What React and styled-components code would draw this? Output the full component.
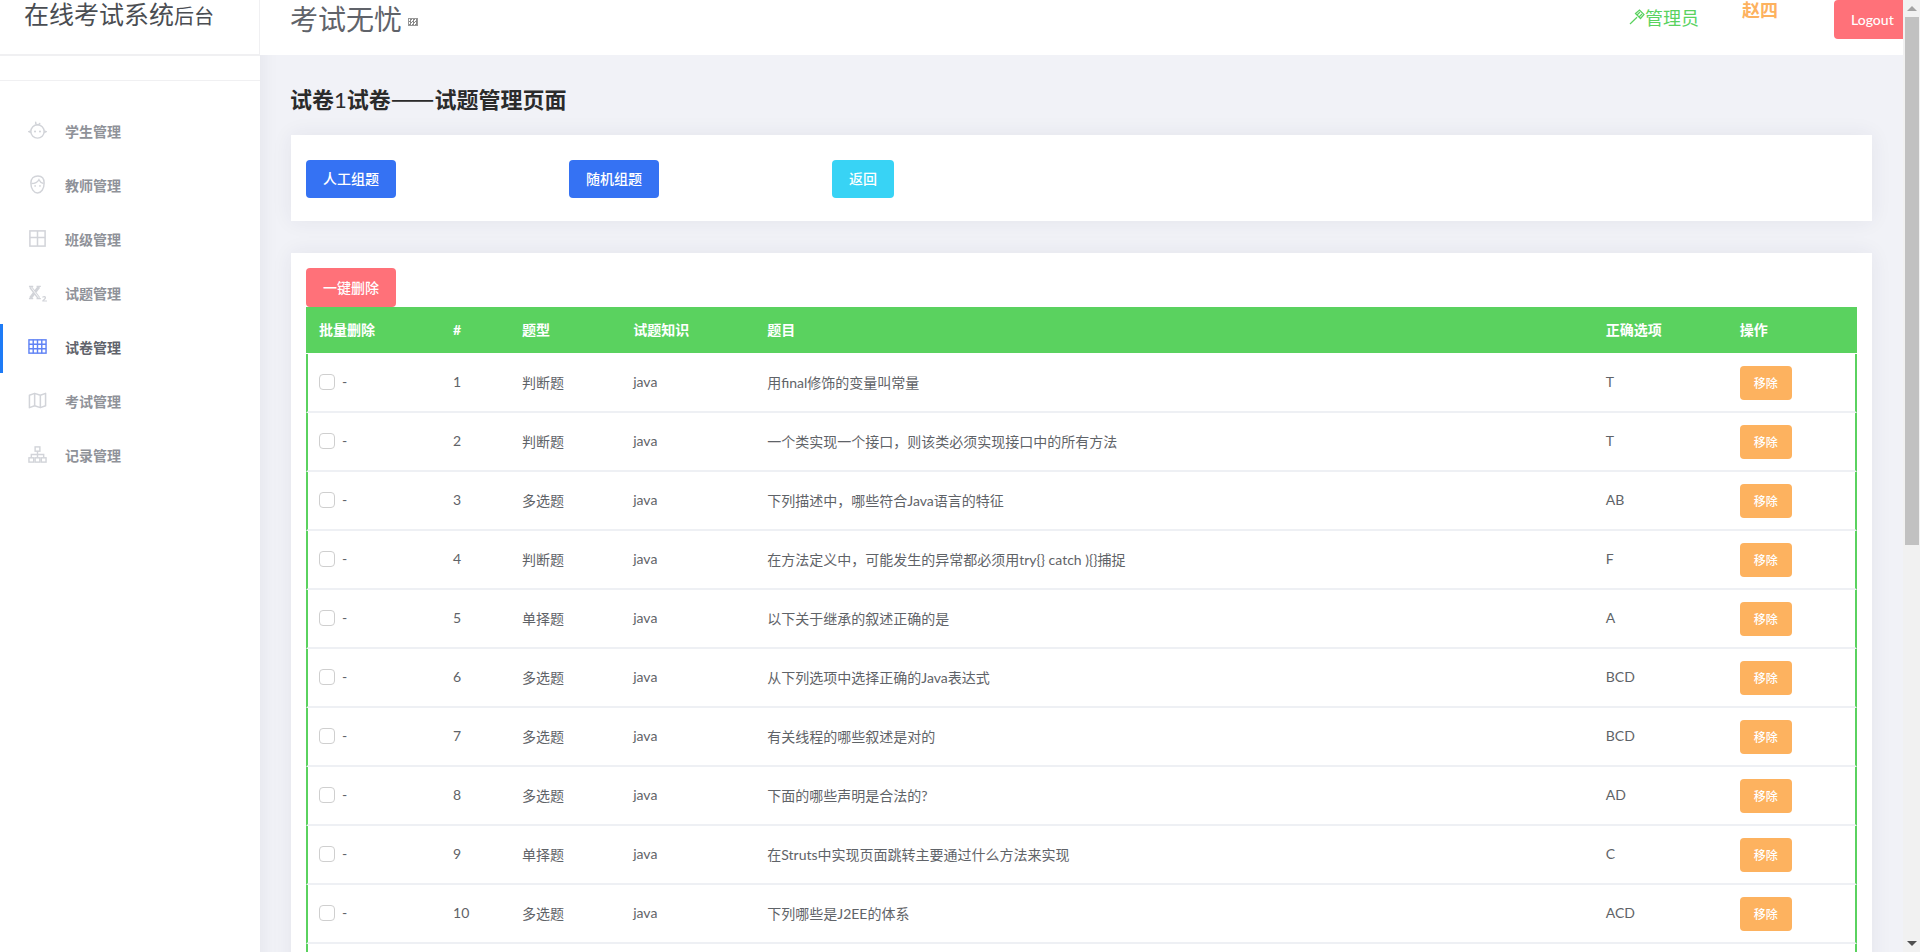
import styled, { createGlobalStyle } from "styled-components";

const GlobalStyle = createGlobalStyle`
  html::-webkit-scrollbar {
    display: none;
  }
  body {
    margin: 0;
    background: #f1f2f7;
    font-family: Lato, "Noto Sans CJK SC", sans-serif;
    font-size: 14px;
    color: #5f6368;
  }
  * {
    box-sizing: border-box;
  }
`;

const Layout = styled.div`
  display: flex;
  align-items: stretch;
  min-height: 100vh;
  padding-right: 17px;
`;

const Sidebar = styled.aside`
  width: 260px;
  flex: none;
  background: #fff;
  box-shadow: 0 0 18px rgba(40, 40, 80, 0.08);
  position: relative;
  z-index: 2;
`;

const Brand = styled.div`
  height: 56px;
  padding-left: 24px;
  border-bottom: 2px solid #f0f0f2;
  border-right: 1px solid #f0f0f2;
  font-size: 25px;
  line-height: 28px;
  color: #4a4d52;
  small {
    font-size: 20px;
  }
`;

const BrandGap = styled.div`
  height: 25px;
  border-bottom: 1px solid #f0f0f2;
`;

const Nav = styled.nav`
  padding-top: 27px;
  display: flex;
  flex-direction: column;
  gap: 5px;
`;

const NavItem = styled.a`
  height: 49px;
  padding-bottom: 4px;
  display: flex;
  align-items: center;
  gap: 18px;
  font-size: 14px;
  font-weight: 600;
  color: ${(p) => (p.$active ? "#60636b" : "#8f9299")};
  border-left: ${(p) => (p.$active ? "3px solid #1e7bf6" : "none")};
  padding-left: ${(p) => (p.$active ? "25px" : "28px")};
  svg {
    flex: none;
    width: 19px;
    height: 19px;
    color: ${(p) => (p.$active ? "#5f82f5" : "#d2d4d9")};
  }
`;

const Main = styled.main`
  flex: 1;
  min-width: 0;
`;

const Header = styled.header`
  height: 55px;
  background: #fff;
  display: flex;
  padding-left: 30px;
  overflow: hidden;
  position: relative;
  z-index: 3;
`;

const HeaderTitle = styled.div`
  font-size: 28px;
  line-height: 38px;
  color: #60636a;
  display: flex;
  align-items: flex-start;
`;

const Tofu = styled.span`
  width: 10px;
  height: 8px;
  margin: 18px 0 0 6px;
  border: 1px solid #999;
  background: repeating-conic-gradient(#888 0 25%, #fff 0 50%) 0 0 / 3px 3px;
`;

const HeaderRight = styled.div`
  margin-left: auto;
  display: flex;
  align-items: flex-start;
`;

const RoleText = styled.div`
  display: flex;
  align-items: center;
  height: 34px;
  color: #5ad25f;
  font-size: 18px;
  svg {
    width: 16px;
    height: 16px;
  }
`;

const UserName = styled.div`
  margin-left: 43px;
  color: #fdb25f;
  font-size: 18px;
  font-weight: 700;
  line-height: 20px;
`;

const LogoutButton = styled.button`
  margin-left: 56px;
  width: 69px;
  height: 39px;
  padding: 0 0 0 17px;
  border: none;
  border-radius: 4px 0 0 4px;
  background: #ff7179;
  color: #fff;
  text-align: left;
  font: inherit;
  font-size: 14px;
  font-weight: 500;
`;

const Content = styled.div`
  padding: 27px 31px 30px 30px;
`;

const PageTitle = styled.h3`
  height: 30px;
  margin: 0 0 23px;
  font-size: 22px;
  line-height: 30px;
  font-weight: 700;
  color: #2b2b2b;
  span {
    font-weight: 400;
  }
`;

const Dash = styled.span`
  font-family: "Noto Sans CJK SC", sans-serif;
  font-size: 26px;
`;

const Card = styled.section`
  margin: 0 0 32px 1px;
  background: #fff;
  box-shadow: 0 0 20px rgba(40, 40, 80, 0.07);
  padding: ${(p) => p.$padding};
`;

const ActionRow = styled.div`
  display: flex;
  gap: 173px;
`;

const Button = styled.button`
  display: block;
  height: ${(p) => p.$h || "38px"};
  padding: 0 ${(p) => p.$px || "17px"} 2px;
  border: none;
  border-radius: 4px;
  background: ${(p) => p.$color};
  color: #fff;
  font: inherit;
  font-size: ${(p) => p.$size || "14px"};
  font-weight: 500;
`;

const RemoveButton = styled(Button)`
  margin-top: 3px;
`;

const Table = styled.table`
  width: 100%;
  table-layout: fixed;
  border-collapse: separate;
  border-spacing: 0;
`;

const Th = styled.th`
  height: 47px;
  padding: 0 12px 2px;
  background: #5ad25f;
  border-bottom: 1px solid #fff;
  color: #fff;
  font-weight: 700;
  text-align: left;
  &:first-child {
    padding-left: 13px;
  }
`;

const Td = styled.td`
  height: 59px;
  padding: 0 12px 2px;
  border-bottom: 2px solid #eef0f4;
  &:first-child {
    padding-left: 11px;
    border-left: 2px solid #5ad25f;
  }
  &:last-child {
    border-right: 2px solid #5ad25f;
  }
`;

const CheckCell = styled.label`
  display: flex;
  align-items: center;
  gap: 7px;
`;

const CheckBox = styled.span`
  width: 16px;
  height: 16px;
  border: 1px solid #cfcfcf;
  border-radius: 4px;
  background: #fff;
`;

const Scrollbar = styled.div`
  position: fixed;
  top: 0;
  right: 0;
  bottom: 0;
  width: 17px;
  background: #f1f1f1;
  z-index: 5;
  display: flex;
  flex-direction: column;
  align-items: center;
`;

const ScrollArrow = styled.span`
  width: 0;
  height: 0;
  margin: 6px 0;
  border-left: 5px solid transparent;
  border-right: 5px solid transparent;
  border-${(p) => (p.$down ? "top" : "bottom")}: 5px solid ${(p) => (p.$down ? "#505050" : "#a3a3a3")};
  ${(p) => p.$down && "margin-top: auto;"}
`;

const ScrollThumb = styled.span`
  width: 14px;
  height: 528px;
  background: #c1c1c1;
`;

const IconBaby = () => (
  <svg viewBox="0 0 20 20" fill="none" stroke="currentColor" strokeWidth="1.5">
    <circle cx="10" cy="11" r="7" />
    <path d="M10 4C8 3.600 7.400 1.800 8.600.8M10 4c1.600-.2 2.400-1 2.600-2" />
    <path d="M3 10.400L1 11.200l2 1M17 10.400l2 .8-2 1" />
    <circle cx="7.400" cy="11" r="1.100" fill="currentColor" stroke="none" />
    <circle cx="12.600" cy="11" r="1.100" fill="currentColor" stroke="none" />
  </svg>
);

const IconMan = () => (
  <svg viewBox="0 0 20 20" fill="none" stroke="currentColor" strokeWidth="1.5">
    <path d="M3 8.500C3 3.800 6 1 10.500 1S17 4 17 8.500c0 6.200-3.200 10.500-7 10.500S3 14.500 3 8.500z" />
    <path d="M3.500 9c3.300 0 6.500-1.200 8-4 1 2.200 2.600 3.500 5 4" />
    <circle cx="7.500" cy="11.500" r=".9" fill="currentColor" stroke="none" />
    <circle cx="12.600" cy="11.500" r=".9" fill="currentColor" stroke="none" />
  </svg>
);

const IconGrid = () => (
  <svg viewBox="0 0 20 20" fill="none" stroke="currentColor" strokeWidth="1.6">
    <rect x="2" y="2" width="16" height="16" />
    <path d="M10 2v16M2 9h16" />
  </svg>
);

const IconSubscript = () => (
  <svg viewBox="0 0 20 20" fill="none">
    <path d="M2.500 4L11.500 16M11.500 4L2.500 16" stroke="currentColor" strokeWidth="3.200" />
    <path d="M1 3.500h4.500M9 3.500h4.500M1 16.500h4.500M9 16.500h4.500" stroke="currentColor" strokeWidth="1.200" />
    <path d="M3.200 4.500l8.200 11" stroke="#fff" strokeWidth=".8" />
    <path
      d="M15 19.500v-1.200c1.700-1.300 2.600-2 2.600-2.700 0-.4-.3-.6-.7-.6-.5 0-1 .2-1.500.6l-.5-1c.6-.5 1.400-.8 2.200-.8 1.200 0 1.900.7 1.900 1.700 0 1-.8 1.800-2.100 2.800H20v1.200z"
      fill="currentColor"
    />
  </svg>
);

const IconTable = () => (
  <svg viewBox="0 0 20 20" fill="none" stroke="currentColor" strokeWidth="1.5">
    <rect x="1" y="3" width="18" height="14" />
    <path d="M1 7.700h18M1 12.300h18M5.500 3v14M10 3v14M14.500 3v14" />
  </svg>
);

const IconMap = () => (
  <svg viewBox="0 0 20 20" fill="none" stroke="currentColor" strokeWidth="1.6" strokeLinejoin="round">
    <path d="M1.500 4.500L7 2.500l6 2 5.500-2v13l-5.500 2-6-2-5.500 2zM7 2.500v13M13 4.500v13" />
  </svg>
);

const IconSitemap = () => (
  <svg viewBox="0 0 20 20" fill="none" stroke="currentColor" strokeWidth="1.500">
    <rect x="7.500" y="2" width="5" height="4.500" />
    <rect x="1" y="13.500" width="5" height="4.500" />
    <rect x="7.500" y="13.500" width="5" height="4.500" />
    <rect x="14" y="13.500" width="5" height="4.500" />
    <path d="M10 6.500v7M3.500 13.500V10h13v3.500" />
  </svg>
);

const IconGavel = () => (
  <svg viewBox="0 0 16 16" fill="none" stroke="currentColor" strokeWidth="1.200">
    <path d="M1 15l7-6.800" />
    <path d="M6.500 4.500L10.500 1l4.500 4.500-3.500 4z" />
    <path d="M8 6l3-3M10 8l3-3" />
  </svg>
);

const navItems = [
  { label: "学生管理", icon: <IconBaby /> },
  { label: "教师管理", icon: <IconMan /> },
  { label: "班级管理", icon: <IconGrid /> },
  { label: "试题管理", icon: <IconSubscript /> },
  { label: "试卷管理", icon: <IconTable />, active: true },
  { label: "考试管理", icon: <IconMap /> },
  { label: "记录管理", icon: <IconSitemap /> },
];

const columns = [
  { title: "批量删除", width: 135 },
  { title: "#", width: 69 },
  { title: "题型", width: 111 },
  { title: "试题知识", width: 134 },
  { title: "题目", width: 838 },
  { title: "正确选项", width: 134 },
  { title: "操作", width: 129 },
];

const questions = [
  ["判断题", "用final修饰的变量叫常量", "T"],
  ["判断题", "一个类实现一个接口\uff0c则该类必须实现接口中的所有方法", "T"],
  ["多选题", "下列描述中\uff0c哪些符合Java语言的特征", "AB"],
  ["判断题", "在方法定义中\uff0c可能发生的异常都必须用try{} catch ){}捕捉", "F"],
  ["单择题", "以下关于继承的叙述正确的是", "A"],
  ["多选题", "从下列选项中选择正确的Java表达式", "BCD"],
  ["多选题", "有关线程的哪些叙述是对的", "BCD"],
  ["多选题", "下面的哪些声明是合法的?", "AD"],
  ["单择题", "在Struts中实现页面跳转主要通过什么方法来实现", "C"],
  ["多选题", "下列哪些是J2EE的体系", "ACD"],
  // rows below the fold, only there for the page height
  ["判断题", "", "T"],
  ["判断题", "", "T"],
  ["判断题", "", "F"],
  ["单择题", "", "A"],
  ["单择题", "", "C"],
  ["多选题", "", "AB"],
  ["多选题", "", "BC"],
  ["判断题", "", "T"],
  ["判断题", "", "F"],
  ["单择题", "", "D"],
];

const App = () => {
  return (
    <Layout>
      <GlobalStyle />
      <Sidebar>
        <Brand>
          在线考试系统<small>后台</small>
        </Brand>
        <BrandGap />
        <Nav>
          {navItems.map((item) => (
            <NavItem key={item.label} $active={item.active}>
              {item.icon}
              {item.label}
            </NavItem>
          ))}
        </Nav>
      </Sidebar>
      <Main>
        <Header>
          <HeaderTitle>
            考试无忧
            <Tofu />
          </HeaderTitle>
          <HeaderRight>
            <RoleText>
              <IconGavel />
              管理员
            </RoleText>
            <UserName>赵四</UserName>
            <LogoutButton>Logout</LogoutButton>
          </HeaderRight>
        </Header>
        <Content>
          <PageTitle>
            试卷<span>1</span>试卷<Dash>——</Dash>试题管理页面
          </PageTitle>
          <Card $padding="25px 15px 23px">
            <ActionRow>
              <Button $color="#3572f3">人工组题</Button>
              <Button $color="#3572f3">随机组题</Button>
              <Button $color="#38d3f5">返回</Button>
            </ActionRow>
          </Card>
          <Card $padding="15px">
            <Button $color="#ff7179" $h="39px">
              一键删除
            </Button>
            <Table>
              <colgroup>
                {columns.map((c) => (
                  <col key={c.title} width={c.width} />
                ))}
              </colgroup>
              <thead>
                <tr>
                  {columns.map((c) => (
                    <Th key={c.title}>{c.title}</Th>
                  ))}
                </tr>
              </thead>
              <tbody>
                {questions.map((q, i) => (
                  <tr key={i}>
                    <Td>
                      <CheckCell>
                        <CheckBox />-
                      </CheckCell>
                    </Td>
                    <Td>{i + 1}</Td>
                    <Td>{q[0]}</Td>
                    <Td>java</Td>
                    <Td>{q[1]}</Td>
                    <Td>{q[2]}</Td>
                    <Td>
                      <RemoveButton $color="#fdb25f" $h="34px" $px="14px" $size="12px">
                        移除
                      </RemoveButton>
                    </Td>
                  </tr>
                ))}
              </tbody>
            </Table>
          </Card>
        </Content>
      </Main>
      <Scrollbar>
        <ScrollArrow />
        <ScrollThumb />
        <ScrollArrow $down />
      </Scrollbar>
    </Layout>
  );
};

export default App;
